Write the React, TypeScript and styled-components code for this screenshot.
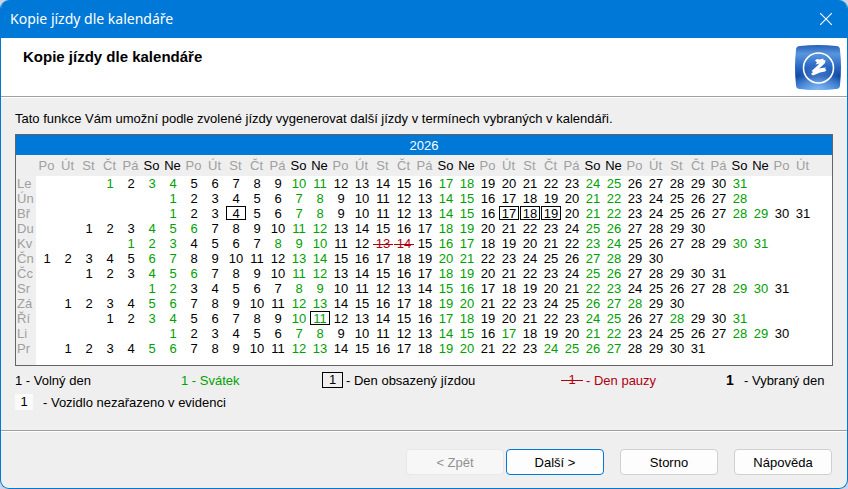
import React from "react";
import styled, { createGlobalStyle, css } from "styled-components";

const BLUE = "#0078d7";
const GREEN = "#00a100";
const RED = "#b00010";
const PANEL = "#efefef";

const GlobalStyle = createGlobalStyle`
  * { box-sizing: border-box; }
  body {
    margin: 0;
    background: #cbd5e6;
    color: #000;
    font: 13px/15px "Liberation Sans", Arial, sans-serif;
  }
`;

const Dialog = styled.main`
  display: flex;
  flex-direction: column;
  min-height: 100vh;
  overflow: hidden;
  border: 1px solid ${BLUE};
  border-top: 0;
  border-radius: 9px;
  background: ${PANEL};
`;

const TitleBar = styled.header`
  display: flex;
  align-items: center;
  justify-content: space-between;
  height: 38px;
  padding: 0 9px;
  background: ${BLUE};
  color: #fff;
  font: 14px/20px "Noto Sans", "Open Sans", sans-serif;
`;

const CloseButton = styled.button`
  display: grid;
  place-items: center;
  width: 24px;
  height: 24px;
  padding: 0;
  border: 0;
  background: none;
  color: #fff;
`;

const Banner = styled.section`
  display: flex;
  justify-content: space-between;
  height: 60px;
  padding: 7px 6px 0 22px;
  border-bottom: 1px solid #fff;
  background: #fff;
  box-shadow: inset 0 -1px 0 #a0a0a0;
`;

const Heading = styled.h1`
  margin: 4px 0 0;
  font-size: 15px;
  line-height: 16px;
`;

const Content = styled.section`
  flex: 1;
  padding: 13px 14px 0;
`;

const Intro = styled.p`
  margin: 0 0 8px;
`;

const CalendarFrame = styled.div`
  padding-bottom: 9px;
  border: 1px solid #646464;
  background: linear-gradient(to right, ${PANEL} 20px, #fff 20px);
`;

const Calendar = styled.table`
  width: 100%;
  table-layout: fixed;
  border-collapse: collapse;
  text-align: center;

  th, td {
    height: 15px;
    padding: 0;
    font-weight: normal;
    white-space: nowrap;
  }
`;

const YearCell = styled.th`
  && {
    height: 20px;
    background: ${BLUE};
    color: #fff;
  }
`;

const WeekdayRow = styled.tr`
  background: ${PANEL};
`;

const Weekday = styled.th<{ $weekend: boolean }>`
  && { height: 21px; }
  color: ${(p) => (p.$weekend ? "#000" : "#a0a0a0")};
`;

const MonthName = styled.th`
  && { padding-left: 1px; }
  color: #a0a0a0;
  text-align: left;
`;

const LabelCol = styled.col`
  width: 20px;
`;

const DayCol = styled.col`
  width: 21px;
`;

type Kind = "free" | "taken" | "pause" | "outside" | "picked";

const kinds = {
  free: css``,
  taken: css`box-shadow: inset 0 0 0 1px #000;`,
  pause: css`
    color: ${RED};
    background: linear-gradient(${RED}, ${RED}) 0 8px / 100% 1px no-repeat;
  `,
  outside: css`background: #fafafa;`,
  picked: css`
    font-size: 14px;
    font-weight: bold;
  `,
};

const DayMark = styled.span<{ $kind: Kind; $green: boolean }>`
  display: block;
  height: 14px;
  margin: 0 0 1px 1px;
  line-height: 15px;
  ${(p) => kinds[p.$kind]}
  ${(p) => p.$green && css`color: ${GREEN};`}
`;

const Legend = styled.ul`
  display: grid;
  grid-template-columns: 166fr 141fr 239fr 165fr 107fr;
  row-gap: 4px;
  margin: 5px 0 0;
  padding: 0;
  list-style: none;
`;

const LegendItem = styled.li<{ $color?: string; $wide?: boolean }>`
  display: flex;
  align-items: center;
  gap: ${(p) => (p.$wide ? 10 : 3)}px;
  height: 18px;
  color: ${(p) => p.$color ?? "#000"};
  white-space: nowrap;
  ${(p) => p.$wide && css`grid-column: span 5;`}
`;

const Sample = styled.span<{ $kind: Kind; $width: number }>`
  width: ${(p) => p.$width}px;
  height: 16px;
  line-height: 16px;
  text-align: ${(p) => (p.$kind === "picked" ? "left" : "center")};
  ${(p) => kinds[p.$kind]}
`;

const Footer = styled.footer`
  display: flex;
  justify-content: flex-end;
  gap: 16px;
  padding: 18px 15px 13px;
  border-top: 1px solid #a0a0a0;
  box-shadow: inset 0 1px 0 #fff;
`;

const Pair = styled.div`
  display: flex;
  gap: 2px;
`;

const Button = styled.button<{ $primary?: boolean }>`
  width: 98px;
  height: 26px;
  padding: 0;
  border: 1px solid ${(p) => (p.$primary ? BLUE : "#d0d0d0")};
  border-radius: 4px;
  background: #fdfdfd;
  color: #000;
  font: inherit;

  &:disabled {
    border-color: #e8e8e8;
    background: #f7f7f7;
    color: #919191;
  }
`;

const WEEKDAYS = ["Po", "Út", "St", "Čt", "Pá", "So", "Ne"];
const COLUMNS = Array.from({ length: 37 }, (_, i) => i);

interface Month {
  name: string;
  start: number;
  days: number;
  holidays?: number[];
  taken?: number[];
  pause?: number[];
}

const MONTHS: Month[] = [
  { name: "Le", start: 3, days: 31, holidays: [1] },
  { name: "Ún", start: 6, days: 28 },
  { name: "Bř", start: 6, days: 31, taken: [4, 17, 18, 19] },
  { name: "Du", start: 2, days: 30, holidays: [6] },
  { name: "Kv", start: 4, days: 31, holidays: [1, 8], pause: [13, 14] },
  { name: "Čn", start: 0, days: 30 },
  { name: "Čc", start: 2, days: 31, holidays: [6] },
  { name: "Sr", start: 5, days: 31 },
  { name: "Zá", start: 1, days: 30, holidays: [28] },
  { name: "Ří", start: 3, days: 31, holidays: [28], taken: [11] },
  { name: "Li", start: 6, days: 30, holidays: [17] },
  { name: "Pr", start: 1, days: 31, holidays: [24, 25] },
];

const isWeekend = (column: number) => column % 7 >= 5;

function Day({ month, column }: { month: Month; column: number }) {
  const day = column - month.start + 1;
  if (day < 1 || day > month.days) return <td />;
  const kind: Kind = month.taken?.includes(day)
    ? "taken"
    : month.pause?.includes(day)
      ? "pause"
      : "free";
  const green = isWeekend(column) || !!month.holidays?.includes(day);
  return (
    <td>
      <DayMark $kind={kind} $green={green}>{day}</DayMark>
    </td>
  );
}

const TILE = "M5 1Q23-1 41 1Q45 1 45 5Q47 22 45 40Q45 44 41 44Q23 46 5 44Q1 44 1 40Q-1 22 1 5Q1 1 5 1Z";

function Logo() {
  return (
    <svg width="46" height="45" viewBox="0 0 46 45" role="img" aria-label="Logo">
      <defs>
        <linearGradient id="tile" x1="0" y1="0" x2="0" y2="1">
          <stop offset="0" stopColor="#2460b8" />
          <stop offset="0.2" stopColor="#5a96dc" />
          <stop offset="0.45" stopColor="#2f6dc8" />
          <stop offset="0.7" stopColor="#0f48a4" />
          <stop offset="1" stopColor="#4388dc" />
        </linearGradient>
        <radialGradient id="shine" cx="0.5" cy="1" r="0.55">
          <stop offset="0" stopColor="#8ec4fa" stopOpacity="0.8" />
          <stop offset="1" stopColor="#8ec4fa" stopOpacity="0" />
        </radialGradient>
      </defs>
      <path d={TILE} fill="url(#tile)" />
      <path d={TILE} fill="url(#shine)" />
      <circle cx="23.500" cy="23" r="15" fill="none" stroke="#fff" strokeWidth="1.600" />
      <path d="M20 15.500L22 14L24.500 14.500L28.500 13.500L28 14.500L30.500 15.500L30 18L27 21L24 23.500L27 23L31 22.500L30 24L31.500 25L30 26.500L25 27.500L18 30.500L16 29L18 27L16.500 26L21 22L24.500 18.500L20.500 19.500L22 17.500Z" fill="#fff" />
    </svg>
  );
}

export default function App() {
  return (
    <>
      <GlobalStyle />
      <Dialog>
        <TitleBar>
          <span>Kopie jízdy dle kalendáře</span>
          <CloseButton aria-label="Zavřít">
            <svg width="12" height="12" viewBox="0 0 12 12" stroke="currentColor" strokeWidth="1.100">
              <path d="M0 0L12 12M12 0L0 12" />
            </svg>
          </CloseButton>
        </TitleBar>
        <Banner>
          <Heading>Kopie jízdy dle kalendáře</Heading>
          <Logo />
        </Banner>
        <Content>
          <Intro>
            Tato funkce Vám umožní podle zvolené jízdy vygenerovat další jízdy v termínech vybraných v kalendáři.
          </Intro>
          <CalendarFrame>
            <Calendar>
              <colgroup>
                <LabelCol />
                {COLUMNS.map((c) => <DayCol key={c} />)}
                <col />
              </colgroup>
              <thead>
                <tr><YearCell colSpan={39}>2026</YearCell></tr>
                <WeekdayRow>
                  <td />
                  {COLUMNS.map((c) => (
                    <Weekday key={c} scope="col" $weekend={isWeekend(c)}>{WEEKDAYS[c % 7]}</Weekday>
                  ))}
                  <td />
                </WeekdayRow>
              </thead>
              <tbody>
                {MONTHS.map((m) => (
                  <tr key={m.name}>
                    <MonthName scope="row">{m.name}</MonthName>
                    {COLUMNS.map((c) => <Day key={c} month={m} column={c} />)}
                    <td />
                  </tr>
                ))}
              </tbody>
            </Calendar>
          </CalendarFrame>
          <Legend>
            <LegendItem><span>1 - Volný den</span></LegendItem>
            <LegendItem $color={GREEN}><span>1 - Svátek</span></LegendItem>
            <LegendItem><Sample $kind="taken" $width={21}>1</Sample>- Den obsazený jízdou</LegendItem>
            <LegendItem $color={RED}><Sample $kind="pause" $width={22}>1</Sample>- Den pauzy</LegendItem>
            <LegendItem><Sample $kind="picked" $width={15}>1</Sample>- Vybraný den</LegendItem>
            <LegendItem $wide><Sample $kind="outside" $width={18}>1</Sample>- Vozidlo nezařazeno v evidenci</LegendItem>
          </Legend>
        </Content>
        <Footer>
          <Pair>
            <Button type="button" disabled>&lt; Zpět</Button>
            <Button type="button" $primary>Další &gt;</Button>
          </Pair>
          <Button type="button">Storno</Button>
          <Button type="button">Nápověda</Button>
        </Footer>
      </Dialog>
    </>
  );
}
